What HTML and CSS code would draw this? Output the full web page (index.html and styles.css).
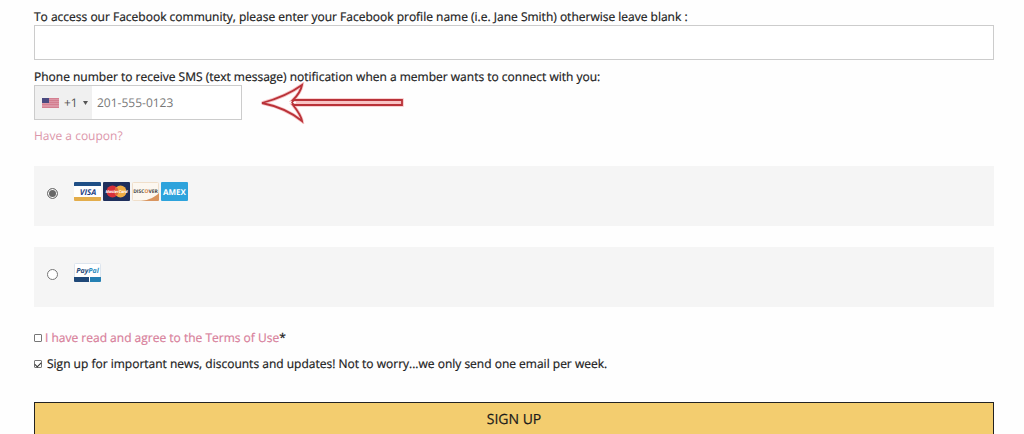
FILE: index.html
```
<!DOCTYPE html>
<html lang="en">
<head>
    <meta charset="UTF-8">
    <meta name="viewport" content="width=device-width, initial-scale=1.0">
    <title>Sign Up</title>
    <link rel="stylesheet" href="styles.css">
</head>
<body>
    <form class="signup">
        <label class="field-label" for="facebook">To access our Facebook community, please enter your Facebook profile name (i.e. Jane Smith) otherwise leave blank :</label>
        <input class="text-input" type="text" id="facebook">

        <label class="field-label phone-label" for="phone">Phone number to receive SMS (text message) notification when a member wants to connect with you:</label>
        <div class="phone-row">
            <div class="phone">
                <div class="country">
                    <svg class="flag" width="17" height="10" viewBox="0 0 17 10" aria-hidden="true">
                        <rect width="17" height="10" fill="#dc96a6"/>
                        <path d="M0 .5h17M0 2.500h17M0 4.500h17M0 6.500h17M0 9.500h17" stroke="#d0788a" stroke-width=".8"/>
                        <rect width="7" height="5" fill="#4b4a80"/>
                    </svg>
                    <select class="country-code" aria-label="Country code">
                        <option>+1</option>
                    </select>
                    <svg class="caret" width="5" height="4" viewBox="0 0 5 4" aria-hidden="true">
                        <path d="M0 0h5L2.500 4z" fill="#555"/>
                    </svg>
                </div>
                <input class="phone-input" type="tel" id="phone" placeholder="201-555-0123">
            </div>
            <svg class="arrow" width="144" height="42" viewBox="0 0 144 42" aria-hidden="true">
                <path d="M36 18H142V24H36z" fill="#fbc4c4"/>
                <path d="M2 21C17 17 31 11 42 3C41 9 37 14 33 18H142V23H33C37 28 41 33 42 39C31 30 17 24 2 21z" fill="none" stroke="#f6c3c5" stroke-width="3.500"/>
                <path d="M2 21C17 17 31 11 42 3C41 9 37 14 33 18H142V23H33C37 28 41 33 42 39C31 30 17 24 2 21z" fill="none" stroke="#b93238" stroke-width="1.800"/>
                <path d="M34 18L32 20.500L34 23" fill="none" stroke="#b93238" stroke-width="1.500"/>
            </svg>
        </div>

        <a class="coupon" href="#">Have a coupon?</a>

        <div class="payment">
            <input class="radio" type="radio" name="payment" id="card" aria-label="Credit card" checked>
            <label class="cards" for="card">
                <svg width="27" height="19" viewBox="0 0 27 19" aria-hidden="true">
                    <rect width="27" height="19" rx="1" fill="#fff"/>
                    <path d="M0 4V1q0-1 1-1h25q1 0 1 1v3z" fill="#1f4f86"/>
                    <path d="M0 15h27v3q0 1-1 1H1q-1 0-1-1z" fill="#e3ad4b"/>
                    <text class="visa" x="14" y="12.500" text-anchor="middle">VISA</text>
                </svg>
                <svg width="27" height="19" viewBox="0 0 27 19" aria-hidden="true">
                    <rect width="27" height="19" rx="1" fill="#1f2f5c"/>
                    <circle cx="9.500" cy="9.500" r="6" fill="#d8303a"/>
                    <circle cx="17.500" cy="9.500" r="6" fill="#efad45"/>
                    <path d="M13.500 5a6 6 0 0 1 0 9a6 6 0 0 1 0-9" fill="#e0673c"/>
                    <text class="mastercard" x="13.500" y="11" text-anchor="middle">MasterCard</text>
                </svg>
                <svg width="27" height="19" viewBox="0 0 27 19" aria-hidden="true">
                    <rect x=".5" y=".5" width="26" height="18" rx="1" fill="#fcf7f0" stroke="#f0dfca"/>
                    <path d="M9 19C17 18 23 15 27 11v7q0 1-1 1z" fill="#d99560"/>
                    <text class="discover" x="13.500" y="11" text-anchor="middle">DISC<tspan fill="#d9843f">O</tspan>VER</text>
                </svg>
                <svg width="27" height="19" viewBox="0 0 27 19" aria-hidden="true">
                    <rect width="27" height="19" rx="1" fill="#2da3dc"/>
                    <text class="amex" x="13.500" y="12.500" text-anchor="middle">AMEX</text>
                </svg>
            </label>
        </div>

        <div class="payment">
            <input class="radio" type="radio" name="payment" id="paypal" aria-label="PayPal">
            <label class="cards" for="paypal">
                <svg width="27" height="19" viewBox="0 0 27 19" aria-hidden="true">
                    <rect x=".5" y=".5" width="26" height="18" rx="1" fill="#fff" stroke="#dde5ee"/>
                    <path d="M0 14h15v5H1q-1 0-1-1z" fill="#1f4878"/>
                    <path d="M16 14h11v4q0 1-1 1H16z" fill="#2580b3"/>
                    <text class="paypal" x="13.500" y="9.500" text-anchor="middle">Pay<tspan fill="#2c8cc0">Pal</tspan></text>
                </svg>
            </label>
        </div>

        <div class="check-row terms">
            <input class="checkbox" type="checkbox" id="terms">
            <label for="terms"><a href="#">I have read and agree to the Terms of Use</a>*</label>
        </div>
        <div class="check-row news">
            <input class="checkbox" type="checkbox" id="news" checked>
            <label for="news">Sign up for important news, discounts and updates! Not to worry...we only send one email per week.</label>
        </div>

        <button class="submit" type="submit">SIGN UP</button>
    </form>
</body>
</html>
```
FILE: styles.css
```
* {
    box-sizing: border-box;
}

body {
    margin: 0;
    background-color: #fefefe;
    color: #1a1a1a;
    font-family: "Open Sans", sans-serif;
    font-size: 12px;
    line-height: 16px;
    text-rendering: geometricPrecision;
}

input, select, button {
    margin: 0;
    font-family: inherit;
    text-rendering: inherit;
}

a {
    color: #d87f9b;
    text-decoration: none;
}

.signup {
    display: flex;
    flex-direction: column;
    padding: 9px 30px 0 34px;
}

.field-label,
.check-row,
.submit {
    -webkit-text-stroke: 0.2px;
}

.text-input {
    width: 100%;
    height: 35px;
    padding: 0 10px;
    border: 1px solid #ccc;
    background-color: #fff;
}

.phone-label {
    margin-top: 9px;
}

.phone-row {
    display: flex;
    align-items: center;
    gap: 18px;
}

.phone {
    display: flex;
    width: 208px;
    height: 35px;
    border: 1px solid #ccc;
    background-color: #fff;
}

.country {
    display: flex;
    align-items: center;
    width: 57px;
    padding-left: 7px;
    background-color: #f0f0f0;
}

.country-code {
    width: 24px;
    padding: 0 0 0 5px;
    border: none;
    background: none;
    appearance: none;
    color: #555;
    font-size: 12px;
}

.phone-input {
    flex: 1;
    min-width: 0;
    padding: 0 5px;
    border: none;
    background: none;
    font-size: 12px;
}

.phone-input::placeholder {
    color: #777;
}

/* the arrow head is taller than the field */
.arrow {
    margin: -4px 0;
}

.coupon {
    align-self: flex-start;
    margin: 8px 0 22px;
    color: #dc96aa;
}

.payment {
    display: flex;
    gap: 16px;
    height: 60px;
    margin-bottom: 21px;
    padding: 16px 13px;
    background-color: #f5f5f5;
}

.radio {
    width: 11px;
    height: 11px;
    margin-top: 6px;
    border: 1px solid #777;
    border-radius: 50%;
    background-color: #fff;
    appearance: none;
}

.radio:checked {
    background-color: #666;
    box-shadow: inset 0 0 0 1px #fff;
}

.cards {
    display: flex;
    gap: 2px;
}

.cards text {
    font-weight: 700;
}

.visa {
    fill: #1f4486;
    font-size: 8px;
    font-style: italic;
}

.mastercard {
    fill: #fff;
    font-size: 4px;
    font-style: italic;
}

.discover {
    fill: #444;
    font-size: 5px;
}

.amex {
    fill: #fff;
    font-size: 8px;
}

.paypal {
    fill: #1f4878;
    font-size: 7px;
    font-style: italic;
}

.check-row {
    display: flex;
    align-items: center;
}

.terms {
    gap: 3px;
    margin: 2px 0 10px;
}

.news {
    gap: 5px;
    margin-bottom: 30px;
}

.checkbox {
    width: 8px;
    height: 8px;
    border: 1px solid #777;
    border-radius: 1px;
    background-color: #fff;
    appearance: none;
}

.checkbox:checked::before {
    content: "";
    display: block;
    width: 5px;
    height: 3px;
    margin-top: 1px;
    border: solid #333;
    border-width: 0 0 1px 1px;
    transform: rotate(-45deg);
}

.submit {
    height: 34px;
    padding: 0;
    border: 1px solid #222;
    background-color: #f3cd6f;
    color: #1a1a1a;
    font-size: 14px;
}
```
